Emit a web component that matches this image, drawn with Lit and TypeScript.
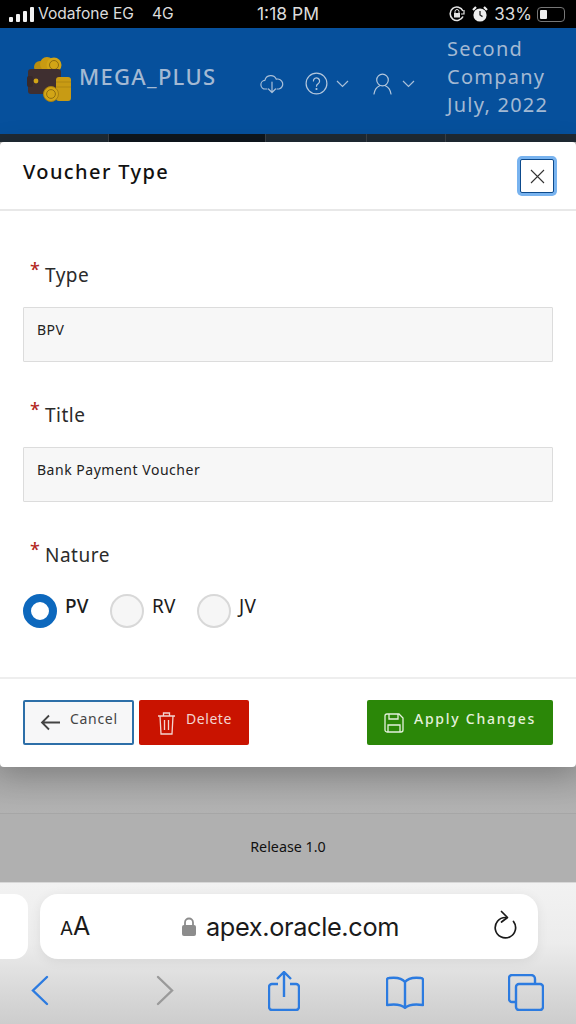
import { LitElement, html, css } from "lit";
import { customElement } from "lit/decorators.js";

@customElement("app-root")
export class AppRoot extends LitElement {
  static styles = css`
    :host { display: block; width: 576px; height: 1024px; overflow: hidden; font-family: "Noto Sans", sans-serif; background: #b0b0b0; }
    svg { display: block; flex: none; }
    .status { height: 28px; background: #000; color: #dcdcdc; font: 15.6px/28px "Inter", "Liberation Sans", sans-serif; display: grid; grid-template-columns: 1fr auto 1fr; padding: 0 9px; box-sizing: border-box; }
    .status > div { display: flex; align-items: center; }
    .carrier { gap: 4px; }
    .carrier .net { margin-left: 14px; }
    .bars { display: flex; align-items: flex-end; gap: 3px; height: 16px; }
    .bars i { width: 4px; background: #f2f2f2; border-radius: 1px; }
    .clock { font-size: 17.5px; margin-right: 0; }
    .right { justify-content: flex-end; gap: 6px; font-size: 17px; }
    .batt { width: 28px; height: 15px; border: 1px solid #777; border-radius: 4px; padding: 2px; box-sizing: border-box; margin-left: -1px; margin-right: 2px; }
    .batt i { display: block; width: 7px; height: 100%; background: #eee; border-radius: 1px; }

    .head { height: 106px; background: #06509c; display: flex; align-items: center; box-sizing: border-box; padding-left: 27px; color: #a3b9d3; }
    .brand { font-size: 22px; font-weight: 500; letter-spacing: 1.3px; margin: -10px 0 0 7px; width: 181px; white-space: nowrap; flex: none; }
    .icons { display: flex; align-items: center; margin-top: 5px; }
    .company { font-size: 20px; line-height: 28px; letter-spacing: 1.25px; margin-left: 32px; white-space: nowrap; margin-top: -8px; }
    .tabs { height: 8px; display: grid; grid-template-columns: 108px 156px 100px 78px 1fr; gap: 1px; background: #3a4148; }
    .tabs i { background: #1f2a33; }
    .tabs i:nth-child(2) { background: #0e161d; }

    .modal { height: 625px; background: #fff; border-radius: 4px; box-shadow: 0 8px 30px rgba(0,0,0,.22); display: flex; flex-direction: column; position: relative; }
    .m-head { height: 69px; flex: none; border-bottom: 2px solid #e8e8e8; box-sizing: border-box; display: flex; justify-content: space-between; padding: 17px 22px 0 23px; }
    h2 { margin: 0; font-size: 20px; line-height: 26px; font-weight: 500; letter-spacing: 1.4px; color: #111; }
    .close { width: 34px; height: 34px; box-sizing: border-box; background: #fff; border: 1px solid #0d4a8c; border-radius: 2px; box-shadow: 0 0 0 3px #78b3ef; display: flex; align-items: center; justify-content: center; padding: 0; }
    .m-body { flex: 1; min-height: 0; padding: 52px 23px 0; }
    .field { height: 140px; }
    .label { display: flex; height: 24px; font-size: 19px; line-height: 24px; letter-spacing: .5px; color: #2b2b2b; margin-left: 7px; }
    .label b { color: #b3261e; font-weight: 500; font-size: 18px; line-height: 18px; width: 15px; margin-top: -3px; }
    .input { margin-top: 20px; height: 55px; box-sizing: border-box; background: #f7f7f7; border: 1px solid #dcdcdc; border-radius: 1px; padding: 0 13px; font-size: 14px; letter-spacing: .52px; line-height: 44px; color: #222; }
    .radios { display: flex; margin-top: 27px; height: 34px; align-items: center; }
    .radio { width: 34px; height: 34px; border-radius: 50%; box-sizing: border-box; border: 2px solid #d8d8d8; background: #f6f6f6; flex: none; }
    .radio.on { border: 8px solid #0d68bd; background: #fff; }
    .rlabel { font-size: 19px; line-height: 24px; color: #1c1c1c; margin: -10px 0 0 8px; letter-spacing: .2px; }
    .rlabel.first { font-weight: 500; width: 45px; }
    .rlabel.second { width: 45px; }
    .m-foot { height: 90px; flex: none; border-top: 2px solid #eee; box-sizing: border-box; padding: 21px 23px 0; display: flex; gap: 5px; }
    .btn { height: 45px; box-sizing: border-box; border-radius: 2px; display: flex; align-items: center; font-size: 14px; letter-spacing: .9px; color: #fff; white-space: nowrap; }
    .btn span { margin-top: -8px; }
    .cancel { width: 111px; background: #f7f7f8; border: 2px solid #2d6fa8; color: #444; padding-left: 15px; gap: 10px; letter-spacing: .7px; }
    .delete { width: 110px; background: #c91300; padding-left: 18px; gap: 10px; color: #f3d5d0; letter-spacing: .55px; }
    .apply { width: 186px; background: #2b8708; margin-left: auto; padding-left: 17px; gap: 10px; font-weight: 500; letter-spacing: 1.75px; color: #e4f1dc; }

    .gap { height: 46px; background: linear-gradient(#a4a4a4, #b2b2b2); border-bottom: 1px solid #a6a6a6; box-sizing: content-box; }
    .rel { height: 68px; background: #b0b0b0; display: flex; justify-content: center; align-items: center; font-size: 14.3px; color: #111; padding-bottom: 4px; box-sizing: border-box; }

    .safari { height: 142px; background: linear-gradient(#f2f2f2 0, #ececec 60px, #d8d8d8 110px, #cdcdcd 100%); border-top: 1px solid #d8d8d8; box-sizing: border-box; position: relative; }
    .urlrow { display: flex; gap: 12px; height: 65px; margin: 11px 0 0 -12px; }
    .prev { width: 40px; background: #fff; border-radius: 0 14px 14px 0; flex: none; }
    .url { width: 498px; background: #fff; border-radius: 18px; box-shadow: 0 2px 12px rgba(0,0,0,.07); display: flex; align-items: center; padding: 0 20px; box-sizing: border-box; color: #1a1a1a; font-family: "Inter", "Liberation Sans", sans-serif; }
    .aa { font-size: 25px; width: 122px; line-height: 1; }
    .aa small { font-size: 19px; }
    .addr { font-size: 25.3px; letter-spacing: -.35px; margin-left: 10px; width: 287px; }
    .nav { display: flex; position: relative; height: 60px; }
    .nav svg { position: absolute; top: 0; }
  `;

  render() {
    return html`
      <div class="status">
        <div class="carrier">
          <div class="bars"><i style="height:5px"></i><i style="height:8px"></i><i style="height:11px"></i><i style="height:15px"></i></div>
          <span>Vodafone EG</span><span class="net">4G</span>
        </div>
        <div class="clock">1:18 PM</div>
        <div class="right">
          <svg width="18" height="18" viewBox="0 0 18 18" fill="none" stroke="#e4e4e4" stroke-width="1.6"><path d="M15 11.5A6.7 6.7 0 1 1 15 6"/><path d="M16 5v4h-3" stroke-width="1.2"/><rect x="6" y="8" width="6" height="4.5" fill="#e4e4e4" stroke="none"/><path d="M7 8V6.5a2 2 0 0 1 4 0V8" stroke-width="1"/></svg>
          <svg width="16" height="18" viewBox="0 0 16 18"><circle cx="8" cy="10" r="6.6" fill="#eee"/><path d="M8 6v4l2.5 1.6" stroke="#222" stroke-width="1.3" fill="none"/><path d="M1 5l3-3M15 5l-3-3" stroke="#eee" stroke-width="2.2"/></svg>
          <span>33%</span>
          <div class="batt"><i></i></div>
        </div>
      </div>

      <div class="head">
        <svg width="45" height="46" viewBox="0 0 45 46" style="margin-top:-5px">
          <circle cx="13" cy="11" r="6" fill="#b98d10"/><circle cx="20" cy="8" r="7" fill="#c99a12"/><circle cx="27" cy="9" r="7.5" fill="#d2a516"/>
          <circle cx="27" cy="9" r="4.5" fill="none" stroke="#8f6d10" stroke-width="1"/>
          <rect x="1" y="13" width="33" height="25" rx="3" fill="#3f2f30"/>
          <rect x="0" y="20" width="6" height="11" rx="2" fill="#38292a"/><circle cx="9" cy="25" r="2.4" fill="#d2a516"/>
          <rect x="29" y="21" width="15" height="24" rx="3" fill="#c89b14"/>
          <path d="M29 26h15M29 31h15" stroke="#a77f10" stroke-width=".7"/>
          <circle cx="24" cy="38" r="7.5" fill="#d2a516" stroke="#a77f10" stroke-width="1"/><circle cx="24" cy="38" r="4.4" fill="none" stroke="#8f6d10" stroke-width="1"/>
        </svg>
        <div class="brand">MEGA_PLUS</div>
        <div class="icons">
          <svg width="24" height="22" viewBox="0 0 24 22" fill="none" stroke="#a9bfd8" stroke-width="1.2" stroke-linecap="round" stroke-linejoin="round"><path d="M7 16H5.5a4.3 4.3 0 0 1-.6-8.6 6 6 0 0 1 11.4-1.2 5 5 0 0 1 2.7 9.8H17"/><path d="M12 9v10M8.5 16l3.5 3.5 3.5-3.5"/></svg>
          <svg style="margin-left:21px" width="23" height="23" viewBox="0 0 23 23" fill="none" stroke="#b4c7dc" stroke-width="1.2" stroke-linecap="round"><circle cx="11.5" cy="11.5" r="10.4"/><path d="M8.4 9a3.1 3.1 0 1 1 4.7 2.7c-1.1.7-1.6 1.3-1.6 2.5"/><circle cx="11.5" cy="17" r=".5"/></svg>
          <svg style="margin-left:8px" width="13" height="8" viewBox="0 0 13 8" fill="none" stroke="#a9bfd8" stroke-width="1.2"><path d="M1 1l5.5 5.5L12 1"/></svg>
          <svg style="margin-left:24px" width="19" height="22" viewBox="0 0 19 22" fill="none" stroke="#b4c7dc" stroke-width="1.2" stroke-linecap="round"><circle cx="9.5" cy="7" r="5.8"/><path d="M1 21c.6-4.2 2.8-7 5.6-8.3M18 21c-.6-4.2-2.8-7-5.6-8.3"/></svg>
          <svg style="margin-left:10px" width="13" height="8" viewBox="0 0 13 8" fill="none" stroke="#a9bfd8" stroke-width="1.2"><path d="M1 1l5.5 5.5L12 1"/></svg>
        </div>
        <div class="company">Second<br />Company<br />July, 2022</div>
      </div>
      <div class="tabs"><i></i><i></i><i></i><i></i><i></i></div>

      <div class="modal">
        <div class="m-head">
          <h2>Voucher Type</h2>
          <button class="close" aria-label="Close">
            <svg width="15" height="15" viewBox="0 0 15 15" stroke="#333" stroke-width="1.1"><path d="M1 1l13 13M14 1L1 14"/></svg>
          </button>
        </div>
        <div class="m-body">
          <div class="field"><div class="label"><b>*</b>Type</div><div class="input">BPV</div></div>
          <div class="field"><div class="label"><b>*</b>Title</div><div class="input">Bank Payment Voucher</div></div>
          <div class="field">
            <div class="label"><b>*</b>Nature</div>
            <div class="radios">
              <div class="radio on"></div><div class="rlabel first">PV</div>
              <div class="radio"></div><div class="rlabel second">RV</div>
              <div class="radio"></div><div class="rlabel">JV</div>
            </div>
          </div>
        </div>
        <div class="m-foot">
          <div class="btn cancel">
            <svg width="20" height="17" viewBox="0 0 20 17" fill="none" stroke="#444" stroke-width="1.8"><path d="M20 8.5H2M9 1.5l-7 7 7 7"/></svg>
            <span>Cancel</span>
          </div>
          <div class="btn delete">
            <svg width="19" height="24" viewBox="0 0 19 24" fill="none" stroke="#f3d5d0" stroke-width="1.3"><path d="M1 5h17M6.5 5V2h6v3M3 5l1 18h11l1-18M7.5 9v10M11.5 9v10"/></svg>
            <span>Delete</span>
          </div>
          <div class="btn apply">
            <svg width="20" height="20" viewBox="0 0 20 20" fill="none" stroke="#e4f1dc" stroke-width="1.3"><path d="M3 1h12l4 4v12a2 2 0 0 1-2 2H3a2 2 0 0 1-2-2V3a2 2 0 0 1 2-2z"/><path d="M5 1v5h9V1M4 19v-7h12v7"/></svg>
            <span>Apply Changes</span>
          </div>
        </div>
      </div>

      <div class="gap"></div>
      <div class="rel">Release 1.0</div>

      <div class="safari">
        <div class="urlrow">
          <div class="prev"></div>
          <div class="url">
            <div class="aa"><small>A</small>A</div>
            <svg width="14" height="20" viewBox="0 0 14 20"><rect y="8" width="14" height="11" rx="2" fill="#8c8c8c"/><path d="M3 9V5.5a4 4 0 0 1 8 0V9" fill="none" stroke="#8c8c8c" stroke-width="1.8"/></svg>
            <div class="addr">apex.oracle.com</div>
            <svg width="24" height="30" viewBox="0 0 24 30" style="margin-top:-4px" fill="none" stroke="#1a1a1a" stroke-width="1.7" stroke-linecap="round" stroke-linejoin="round"><path d="M20.5 11.5A10.2 10.2 0 1 1 12.5 7.5"/><path d="M8.5 1.5l6 6-6 4.5"/></svg>
          </div>
        </div>
        <div class="nav">
          <svg style="left:31px;top:16px" width="18" height="31" viewBox="0 0 18 31" fill="none" stroke="#2c7be0" stroke-width="2.4" stroke-linecap="round"><path d="M16 2L2 15.5 16 29"/></svg>
          <svg style="left:156px;top:16px" width="18" height="31" viewBox="0 0 18 31" fill="none" stroke="#9a9a9a" stroke-width="2.4" stroke-linecap="round"><path d="M2 2l14 13.5L2 29"/></svg>
          <svg style="left:268px;top:12px" width="32" height="40" viewBox="0 0 32 40" fill="none" stroke="#2c7be0" stroke-width="2.4"><path d="M10 13H4a3 3 0 0 0-3 3v20a3 3 0 0 0 3 3h24a3 3 0 0 0 3-3V16a3 3 0 0 0-3-3h-6"/><path d="M16 26V2M9 8l7-7 7 7"/></svg>
          <svg style="left:386px;top:17px" width="38" height="33" viewBox="0 0 38 33" fill="none" stroke="#2c7be0" stroke-width="2.4" stroke-linejoin="round"><path d="M19 6C16 2 11 1 3 2a2 2 0 0 0-2 2v25c7-1 14-1 18 3 4-4 11-4 18-3V4a2 2 0 0 0-2-2c-8-1-13 0-16 4zM19 6v26"/></svg>
          <svg style="left:508px;top:15px" width="36" height="37" viewBox="0 0 36 37" fill="none" stroke="#2c7be0" stroke-width="2.4"><rect x="8" y="10" width="27" height="26" rx="3"/><path d="M8 28H4a3 3 0 0 1-3-3V4a3 3 0 0 1 3-3h19a4 4 0 0 1 4 4v5"/></svg>
        </div>
      </div>
    `;
  }
}
